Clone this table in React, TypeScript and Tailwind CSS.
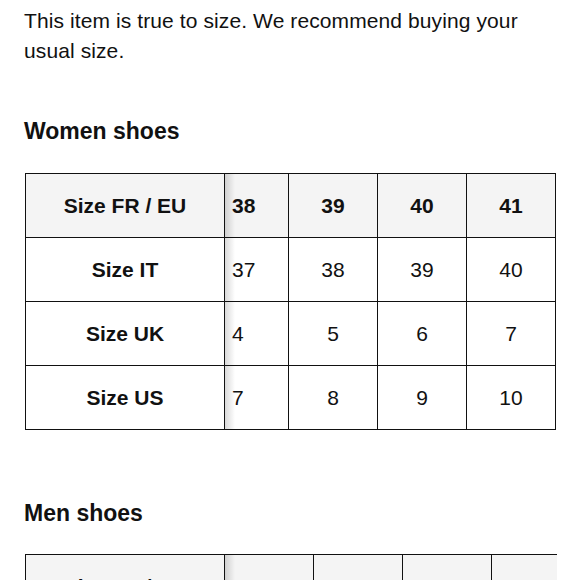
const women = {
  header: ['38', '39', '40', '41'],
  rows: [
    { label: 'Size IT', values: ['37', '38', '39', '40'] },
    { label: 'Size UK', values: ['4', '5', '6', '7'] },
    { label: 'Size US', values: ['7', '8', '9', '10'] },
  ],
};

const men = {
  header: ['40', '41', '42', '43', '44'],
  rows: [
    { label: 'Size IT', values: ['39', '40', '41', '42', '43'] },
    { label: 'Size UK', values: ['6', '7', '8', '9', '10'] },
  ],
};

type SizeTable = typeof women;

function SizeGrid({
  data,
  narrowSecond,
  tableWidth,
}: {
  data: SizeTable;
  narrowSecond: boolean;
  tableWidth: string;
}) {
  const cellW = (i: number) =>
    i === 0 && narrowSecond ? 'w-[64px] text-left pl-[7px]' : 'w-[89px] text-center';

  return (
    <div className="relative w-[532px] overflow-hidden">
      <table className={`border-collapse table-fixed ${tableWidth}`}>
        <thead>
          <tr className="h-[64px] bg-[#f4f4f4]">
            <th className="w-[199px] border border-[#111] font-bold text-center">
              Size FR / EU
            </th>
            {data.header.map((h, i) => (
              <th key={h} className={`border border-[#111] font-bold ${cellW(i)}`}>
                {h}
              </th>
            ))}
          </tr>
        </thead>
        <tbody>
          {data.rows.map((row) => (
            <tr key={row.label} className="h-[64px]">
              <td className="border border-[#111] font-bold text-center">{row.label}</td>
              {row.values.map((v, i) => (
                <td key={i} className={`border border-[#111] ${cellW(i)}`}>
                  {v}
                </td>
              ))}
            </tr>
          ))}
        </tbody>
      </table>
      <div className="pointer-events-none absolute top-0 bottom-0 left-[200px] w-[10px] bg-gradient-to-r from-black/15 to-transparent" />
    </div>
  );
}

export default function App() {
  return (
    <div className="min-h-[580px] bg-white px-[24px] pt-[6px] text-[21px] text-[#111] font-['Liberation_Sans',Arial,sans-serif]">
      <p className="leading-[30px] tracking-[0.1px]">
        This item is true to size. We recommend buying your usual size.
      </p>

      <h2 className="mt-[51px] text-[23px] leading-[28px] font-bold">Women shoes</h2>
      <div className="mt-[28px] pl-[1px]">
        <SizeGrid data={women} narrowSecond tableWidth="w-[531px]" />
      </div>

      <h2 className="mt-[69px] text-[23px] leading-[28px] font-bold">Men shoes</h2>
      <div className="mt-[27px] pl-[1px]">
        <SizeGrid data={men} narrowSecond={false} tableWidth="w-[644px]" />
      </div>
    </div>
  );
}
